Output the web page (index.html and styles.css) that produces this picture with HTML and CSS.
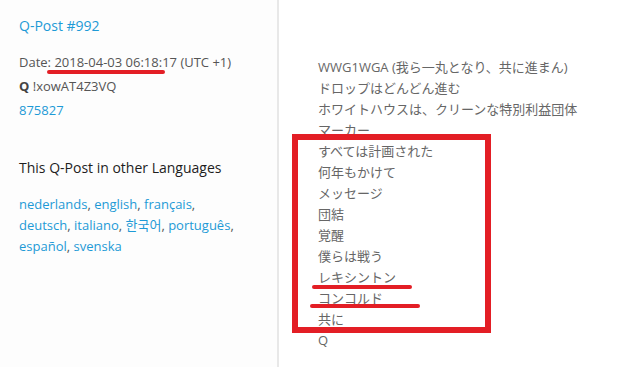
FILE: index.html
```html
<!DOCTYPE html>
<html>
<head>
    <title>Q-Post #992</title>
    <link rel="stylesheet" href="styles.css">
</head>
<body>
    <div class="page">
        <div class="sidebar">
            <a class="post-title" href="#">Q-Post #992</a>
            <div class="meta">
                <div>Date: 2018-04-03 06:18:17 (UTC +1)</div>
                <div><b>Q</b> !xowAT4Z3VQ</div>
                <div><a href="#">875827</a></div>
            </div>
            <h4 class="lang-title">This Q-Post in other Languages</h4>
            <div class="langs">
                <a href="#">nederlands</a>, <a href="#">english</a>, <a href="#">français</a>,
                <a href="#">deutsch</a>, <a href="#">italiano</a>, <a href="#">한국어</a>, <a href="#">português</a>,
                <a href="#">español</a>, <a href="#">svenska</a>
            </div>
            <span class="mark mark-date"></span>
        </div>
        <div class="content">
            <div class="text">
                WWG1WGA (我ら一丸となり、共に進まん)<br>
                ドロップはどんどん進む<br>
                ホワイトハウスは、クリーンな特別利益団体<br>
                マーカー<br>
                すべては計画された<br>
                何年もかけて<br>
                メッセージ<br>
                団結<br>
                覚醒<br>
                僕らは戦う<br>
                レキシントン<br>
                コンコルド<br>
                共に<br>
                Q
            </div>
            <span class="box"></span>
            <span class="mark mark-1"></span>
            <span class="mark mark-2"></span>
        </div>
    </div>
</body>
</html>
```
FILE: styles.css
```css
body {
    margin: 0;
    font-family: "Open Sans", "Noto Sans CJK JP", sans-serif;
    background: #fff;
    overflow: hidden;
}
a {
    color: #1e9ad6;
    text-decoration: none;
}
.page {
    display: flex;
    width: 631px;
    height: 367px;
}
.sidebar {
    position: relative;
    width: 222px;
    padding: 16px 36px 0 19px;
    border-right: 2px solid #e8e8e8;
    background: #fdfdfd;
}
.post-title {
    display: block;
    font-size: 14px;
    line-height: 20px;
}
.meta {
    margin-top: 14px;
    font-size: 13px;
    line-height: 24px;
    color: #555;
    white-space: nowrap;
}
.meta b {
    color: #444;
}
.lang-title {
    margin: 36px 0 0;
    font-size: 14px;
    line-height: 20px;
    font-weight: normal;
    color: #1e1e1e;
    white-space: nowrap;
}
.langs {
    margin-top: 16px;
    font-size: 13px;
    line-height: 21px;
    color: #555;
}
.content {
    position: relative;
    flex: 1;
    padding: 57px 0 0 39px;
}
.text {
    font-size: 13px;
    line-height: 21px;
    color: #666;
}
.box {
    position: absolute;
    left: 13px;
    top: 134px;
    width: 187px;
    height: 187px;
    border: 6px solid #e31e25;
}
.mark {
    position: absolute;
    height: 4px;
    border-radius: 2px;
    background: #e31e25;
}
.mark-date {
    left: 47px;
    top: 70px;
    width: 118px;
}
.mark-1 {
    left: 33px;
    top: 285px;
    width: 100px;
}
.mark-2 {
    left: 31px;
    top: 304px;
    width: 110px;
}
```
